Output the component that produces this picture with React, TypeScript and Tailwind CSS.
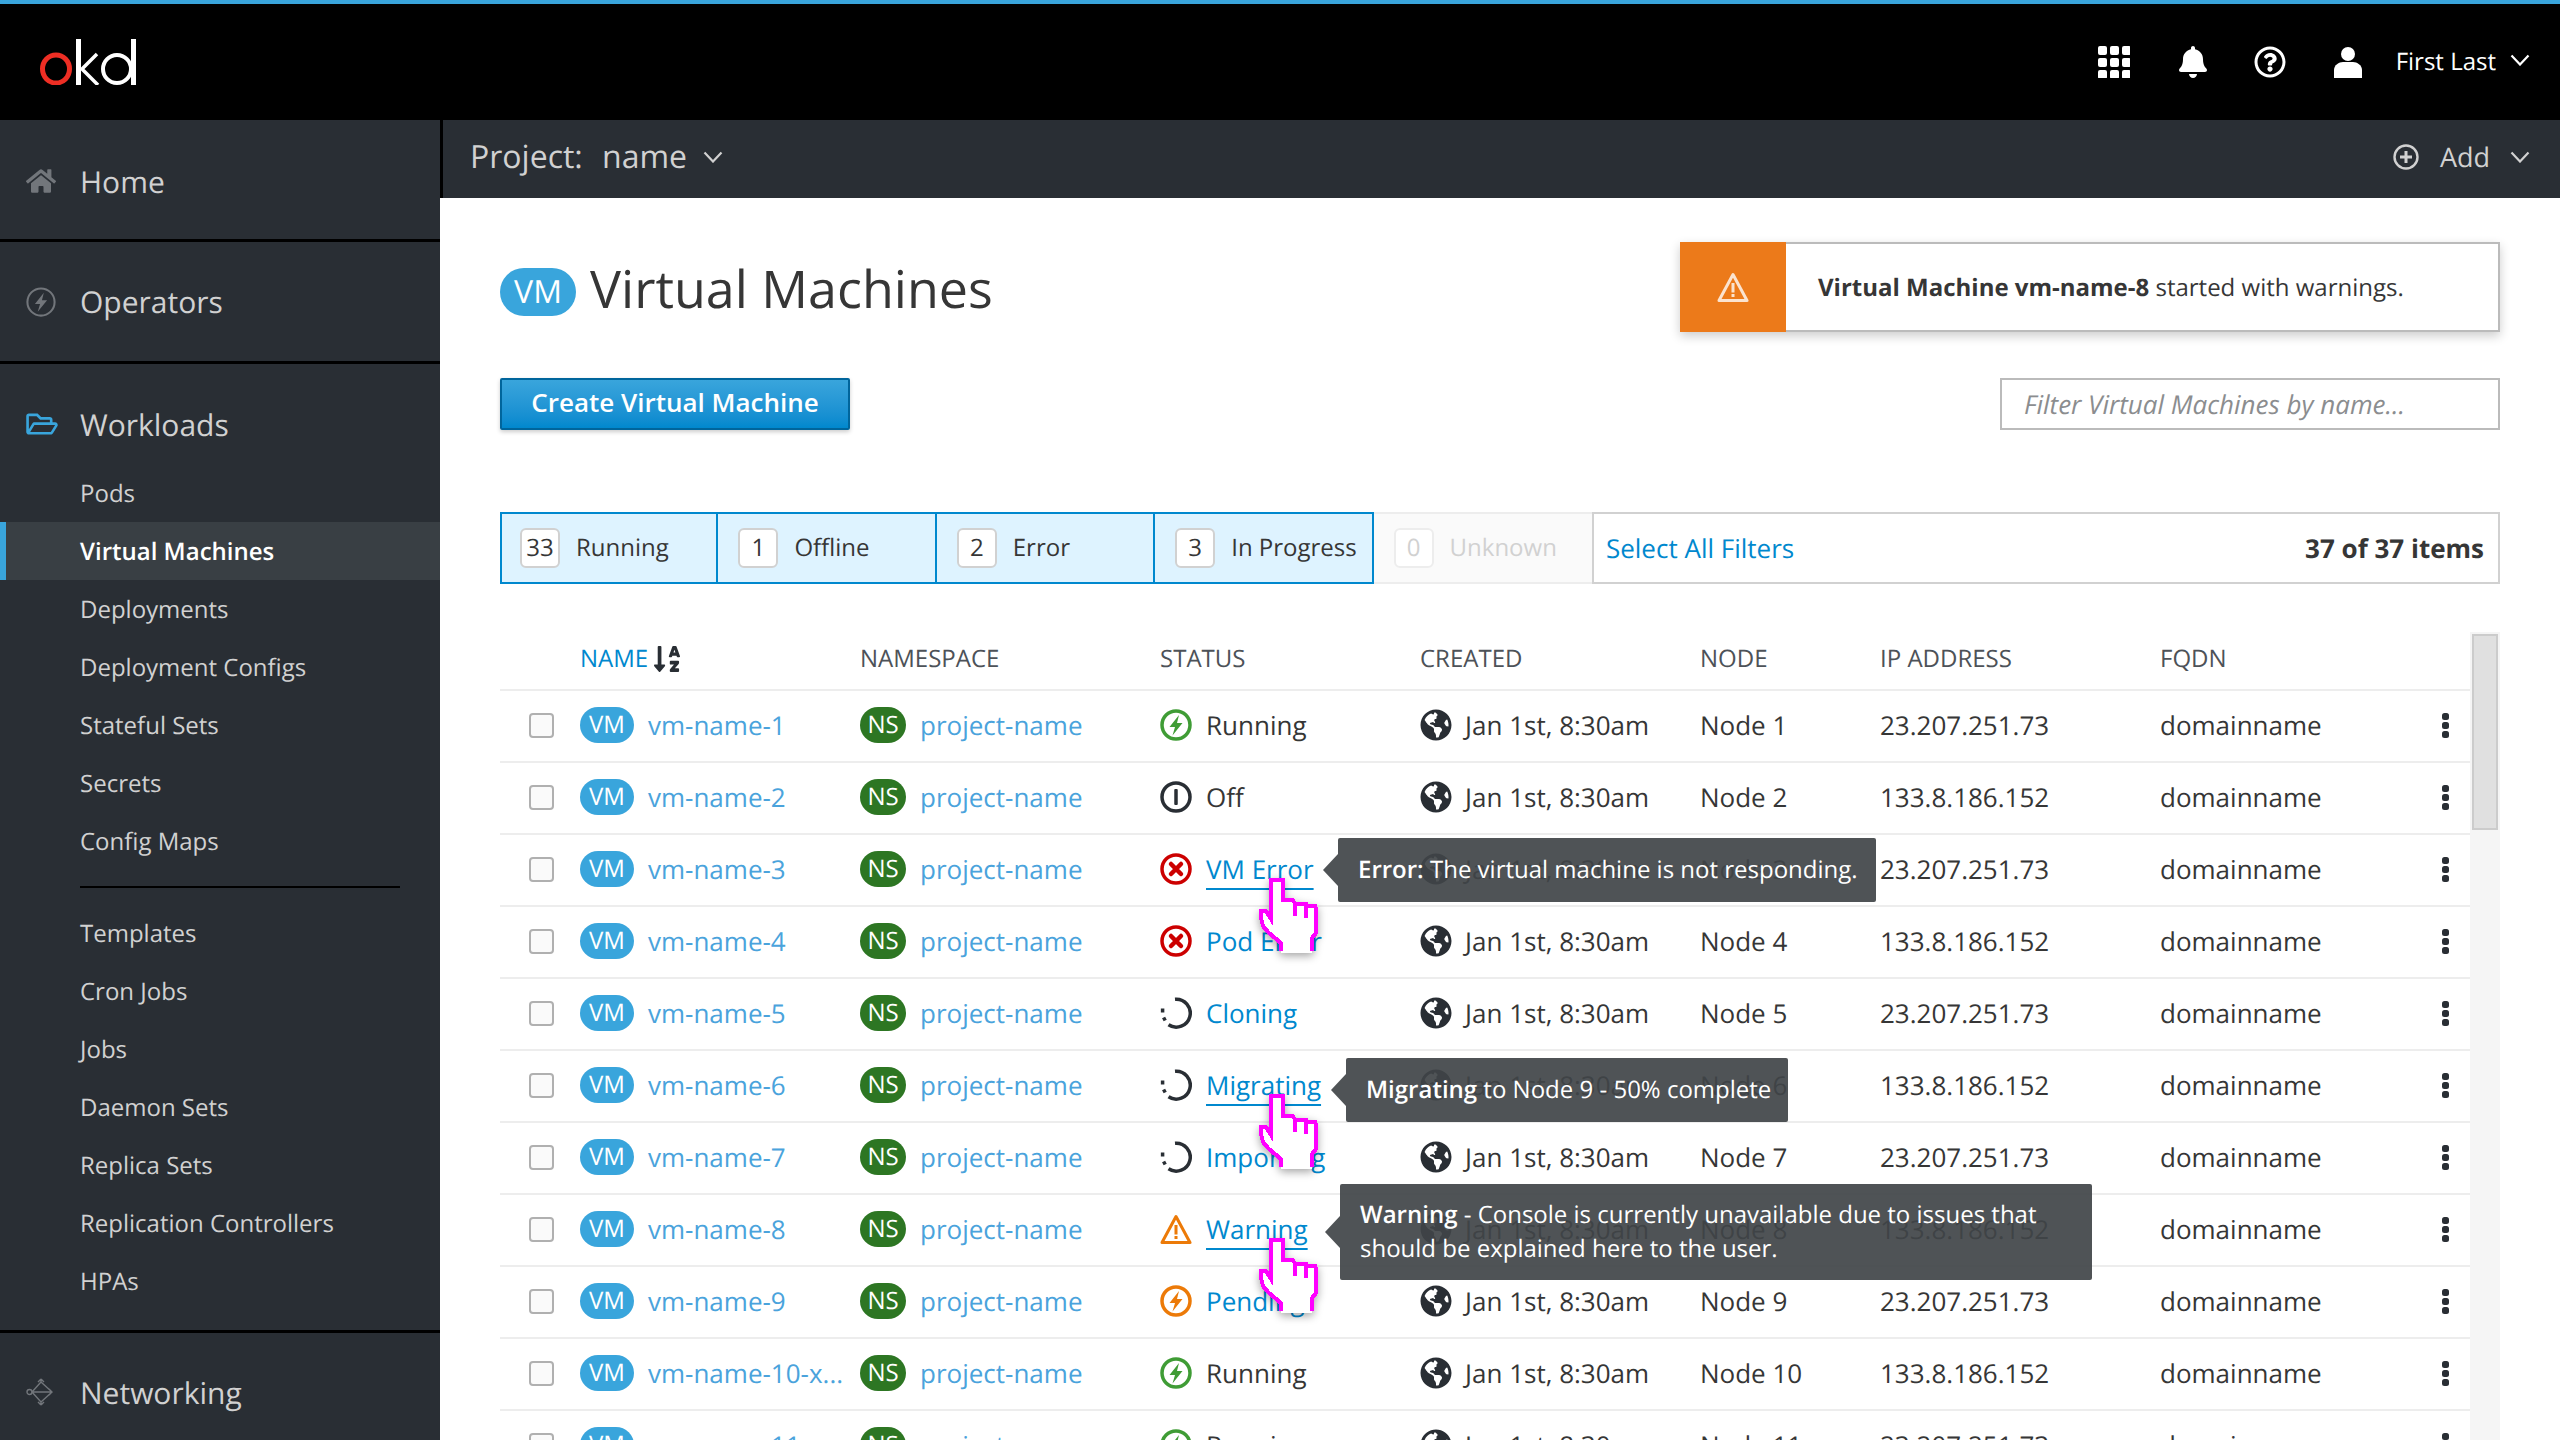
import React from 'react';
import { FaHome, FaRegFolderOpen, FaBell, FaRegQuestionCircle, FaGlobeAmericas, FaSortAlphaDown } from 'react-icons/fa';

const Chevron = ({ className = '' }: { className?: string }) => (
  <svg viewBox="0 0 20 12" className={className} fill="none" stroke="currentColor" strokeWidth="2.2">
    <path d="M1.5 1.5 10 10.5l8.5-9" />
  </svg>
);

const Bolt = ({ color }: { color: string }) => (
  <svg viewBox="0 0 32 32" className="w-8 h-8">
    <circle cx="16" cy="16" r="14" fill="none" stroke={color} strokeWidth="3.5" />
    <path d="M19 6 9.5 18H15l-2.5 8.5L22.5 14H17z" fill={color} />
  </svg>
);

const OffIcon = () => (
  <svg viewBox="0 0 32 32" className="w-8 h-8">
    <circle cx="16" cy="16" r="14" fill="none" stroke="#292e34" strokeWidth="3.5" />
    <rect x="14.25" y="8" width="3.5" height="16" rx="1" fill="#292e34" />
  </svg>
);

const ErrorIcon = () => (
  <svg viewBox="0 0 32 32" className="w-8 h-8">
    <circle cx="16" cy="16" r="14" fill="none" stroke="#cc0000" strokeWidth="3.5" />
    <path d="M11 11l10 10M21 11 11 21" stroke="#cc0000" strokeWidth="4.5" strokeLinecap="round" />
  </svg>
);

const ProgressIcon = () => (
  <svg viewBox="0 0 32 32" className="w-8 h-8" fill="none" stroke="#292e34" strokeWidth="3.5">
    <path d="M15 2.2A14 14 0 1 1 8.5 27.8" />
    <path d="M2.6 11.5v4M3.6 20.5l1.6 3" />
  </svg>
);

const WarnIcon = ({ color = '#ec7a08', className = 'w-8 h-8' }: { color?: string; className?: string }) => (
  <svg viewBox="0 0 32 32" className={className}>
    <path d="M16 3.5 30 29.5H2z" fill="none" stroke={color} strokeWidth="3" strokeLinejoin="round" />
    <rect x="14.5" y="12" width="3" height="9.5" fill={color} />
    <rect x="14.5" y="23" width="3" height="3" fill={color} />
  </svg>
);

const Hand = () => (
  <svg viewBox="0 0 59 75" className="absolute w-[59px] h-[75px] left-[759px] top-[43px] z-20 drop-shadow-[0_3px_4px_rgba(0,0,0,0.35)]" shapeRendering="crispEdges">
    <path d="M12 2h12v20h10l2 4h11l1 2h8l3 3v24l-4 5-2 15H22l-2-10-10-10-6-7-2-8v-7h5l5 8z" fill="#fff" />
    <path d="M22 73V65L10 55 4 48 2 40V33H7L12 41V2H24V22H34L36 26V38M36 26H47V40M47 28H56L57 31V55L53 60V73" fill="none" stroke="#ff00ff" strokeWidth="4" />
  </svg>
);

const Tooltip = ({ left, top, width, height, children }: { left: number; top: number; width: number; height: number; children: React.ReactNode }) => (
  <div style={{ left, top, width, height }} className="absolute z-10 rounded-[2px] bg-[#404448]/92 text-white text-[24px] leading-[34px] flex items-center pl-[20px]">
    <div className="absolute left-[-15px] top-1/2 -translate-y-1/2 w-0 h-0 border-y-[16px] border-y-transparent border-r-[15px] border-r-[#404448]/92" />
    <div>{children}</div>
  </div>
);

const sub1 = ['Pods', 'Virtual Machines', 'Deployments', 'Deployment Configs', 'Stateful Sets', 'Secrets', 'Config Maps'];
const sub2 = ['Templates', 'Cron Jobs', 'Jobs', 'Daemon Sets', 'Replica Sets', 'Replication Controllers', 'HPAs'];

const filters = [
  { n: 33, label: 'Running', on: true },
  { n: 1, label: 'Offline', on: true },
  { n: 2, label: 'Error', on: true },
  { n: 3, label: 'In Progress', on: true },
  { n: 0, label: 'Unknown', on: false },
];

const rows = [
  { name: 'vm-name-1', status: 'Running', icon: <Bolt color="#3f9c35" /> },
  { name: 'vm-name-2', status: 'Off', icon: <OffIcon /> },
  { name: 'vm-name-3', status: 'VM Error', icon: <ErrorIcon />, link: true, under: true },
  { name: 'vm-name-4', status: 'Pod Error', icon: <ErrorIcon />, link: true },
  { name: 'vm-name-5', status: 'Cloning', icon: <ProgressIcon />, link: true },
  { name: 'vm-name-6', status: 'Migrating', icon: <ProgressIcon />, link: true, under: true },
  { name: 'vm-name-7', status: 'Importing', icon: <ProgressIcon />, link: true },
  { name: 'vm-name-8', status: 'Warning', icon: <WarnIcon />, link: true, under: true },
  { name: 'vm-name-9', status: 'Pending', icon: <Bolt color="#ec7a08" />, link: true },
  { name: 'vm-name-10-x...', status: 'Running', icon: <Bolt color="#3f9c35" /> },
  { name: 'vm-name-11', status: 'Running', icon: <Bolt color="#3f9c35" /> },
];

const cols = 'grid grid-cols-[80px_280px_300px_260px_280px_180px_280px_1fr]';

const SubItem = ({ label }: { label: string }) => (
  <div className={`h-[58px] flex items-center pl-[80px] pt-[1px] text-[24px] ${label === 'Virtual Machines' ? 'bg-[#393f44] border-l-[6px] border-[#39a5dc] !pl-[74px] text-white font-semibold' : 'text-[#d1d1d1]'}`}>
    {label}
  </div>
);

export default function App() {
  return (
    <div className="w-[2560px] h-[1440px] overflow-hidden flex flex-col bg-white font-['Open_Sans',sans-serif] text-[#363636] [text-rendering:geometricPrecision]">
      <header className="h-[120px] shrink-0 bg-black border-t-4 border-[#39a5dc] flex items-center justify-between pl-[40px] pr-[30px] text-white">
        <svg viewBox="0 0 96 46" className="w-[96px] h-[46px]" fill="none">
          <ellipse cx="16" cy="30" rx="13.5" ry="14" stroke="#ee2e24" strokeWidth="5" />
          <path d="M38.5 0v46" stroke="#fff" strokeWidth="5" />
          <path d="M57 15 42 30l16 16" stroke="#fff" strokeWidth="3.5" />
          <ellipse cx="77" cy="30" rx="14" ry="14" stroke="#fff" strokeWidth="4" />
          <path d="M93.5 0v46" stroke="#fff" strokeWidth="5" />
        </svg>
        <div className="flex items-center">
          <svg viewBox="0 0 32 32" className="w-8 h-8 mr-[48px]" fill="#fff">
            {[0, 12, 24].flatMap(y => [0, 12, 24].map(x => <rect key={`${x}-${y}`} x={x} y={y} width="9" height="9" rx="2" />))}
          </svg>
          <FaBell className="w-[30px] h-[32px] mr-[46px]" />
          <FaRegQuestionCircle className="w-8 h-8 mr-[48px]" />
          <svg viewBox="0 0 28 32" className="w-[28px] h-8 mr-[34px]" fill="#fff">
            <circle cx="14" cy="8" r="7" />
            <path d="M0 32v-8c0-5 5-8 9-8h10c4 0 9 3 9 8v8z" />
          </svg>
          <span className="text-[24px] mr-[14px]">First Last</span>
          <Chevron className="w-[20px] h-[12px] -mt-[4px]" />
        </div>
      </header>

      <div className="flex flex-1 min-h-0">
        <aside className="w-[440px] shrink-0 bg-[#292e34] flex flex-col">
          <div className="h-[122px] shrink-0 border-b-[3px] border-black flex items-center pl-[26px] pt-[3px] text-[30px] text-[#d1d1d1]">
            <FaHome className="w-[30px] h-[28px] text-[#72767b] mr-[24px]" />
            Home
          </div>
          <div className="h-[122px] shrink-0 border-b-[3px] border-black flex items-center pl-[26px] text-[30px] text-[#d1d1d1]">
            <svg viewBox="0 0 32 32" className="w-[30px] h-[30px] mr-[24px]">
              <circle cx="16" cy="16" r="14.5" fill="none" stroke="#72767b" strokeWidth="2.2" />
              <path d="M19 6 9.5 18H15l-2.5 8.5L22.5 14H17z" fill="#72767b" />
            </svg>
            Operators
          </div>
          <div className="h-[60px] mt-[30px] mb-[10px] shrink-0 flex items-center pl-[26px] text-[30px] text-[#d1d1d1]">
            <FaRegFolderOpen className="w-[32px] h-[28px] text-[#39a5dc] mr-[22px]" />
            Workloads
          </div>
          {sub1.map(s => <SubItem key={s} label={s} />)}
          <div className="h-[2px] bg-black ml-[80px] mr-[40px] my-[16px] shrink-0" />
          {sub2.map(s => <SubItem key={s} label={s} />)}
          <div className="h-[3px] bg-black mt-[20px] shrink-0" />
          <div className="h-[60px] mt-[29px] shrink-0 flex items-center pl-[26px] text-[30px] text-[#d1d1d1]">
            <svg viewBox="0 0 30 30" className="w-[30px] h-[30px] mr-[24px]" fill="none" stroke="#72767b" strokeWidth="1.4">
              <circle cx="3.5" cy="15" r="2.5" />
              <path d="M6 15h20M6 15 15 5l0-3M15 2l-3 3M15 2l3 3M6 15l9 10v3M15 28l-3-3M15 28l3-3M15 5l11 10-11 10M26 15l-3-3M26 15l-3 3" />
            </svg>
            Networking
          </div>
        </aside>

        <main className="flex-1 min-w-0 flex flex-col">
          <div className="h-[78px] shrink-0 bg-[#292e34] border-l-[3px] border-black flex items-center pl-[27px] pr-[30px] pb-[4px] text-[#d1d1d1]">
            <span className="text-[32px] w-[132px]">Project:</span>
            <span className="text-[32px] mr-[16px]">name</span>
            <Chevron className="w-[20px] h-[12px]" />
            <div className="ml-auto flex items-center">
              <svg viewBox="0 0 26 26" className="w-[26px] h-[26px] mr-[21px]" fill="none" stroke="currentColor" strokeWidth="2.4">
                <circle cx="13" cy="13" r="11.5" />
                <path d="M13 7v12M7 13h12" strokeWidth="3" />
              </svg>
              <span className="text-[27px] mr-[20px]">Add</span>
              <Chevron className="w-[20px] h-[12px]" />
            </div>
          </div>

          <div className="flex-1 min-h-0 pl-[60px] pr-[60px] pt-[44px] flex flex-col">
            <div className="flex items-start justify-between h-[90px] shrink-0">
              <div className="flex items-center mt-[23px]">
                <span className="w-[76px] h-[48px] rounded-full bg-[#39a5dc] text-white text-[32px] flex items-center justify-center">VM</span>
                <h1 className="text-[52px] leading-[60px] ml-[14px] -mt-[6px] text-[#363636]">Virtual Machines</h1>
              </div>
              <div className="w-[820px] h-[90px] flex bg-white border-2 border-l-0 border-[#bbbbbb] shadow-[0_4px_10px_rgba(0,0,0,0.2)]">
                <div className="w-[106px] h-[90px] -mt-[2px] bg-[#ec7a1a] flex items-center justify-center shrink-0">
                  <WarnIcon color="#fbe3cf" />
                </div>
                <div className="flex items-center pl-[32px] pt-[1px] text-[24px]">
                  <span><b className="font-bold">Virtual Machine vm-name-8</b> started with warnings.</span>
                </div>
              </div>
            </div>

            <div className="flex items-center justify-between mt-[46px] shrink-0">
              <button className="w-[350px] h-[52px] pb-[4px] rounded-[2px] border-2 border-[#00659c] bg-gradient-to-b from-[#39a5dc] to-[#0088ce] text-white text-[26px] font-semibold shadow-[0_2px_4px_rgba(0,0,0,0.2)]">
                Create Virtual Machine
              </button>
              <div className="w-[500px] h-[52px] border-2 border-[#bbbbbb] flex items-center pl-[22px] italic text-[26px] text-[#8b8d8f]">
                Filter Virtual Machines by name...
              </div>
            </div>

            <div className="flex h-[72px] mt-[82px] shrink-0">
              {filters.map(f => (
                <div key={f.label} className={`w-[218.4px] shrink-0 flex items-center pl-[20px] first:pl-[18px] first:border-l-2 text-[24px] border-y-2 ${f.on ? 'bg-[#def3ff] border-[#0088ce] border-r-2' : 'bg-[#fafafa] border-[#ededed] text-[#d1d1d1]'}`}>
                  <span className={`w-[40px] h-[40px] rounded-[6px] border-2 flex items-center justify-center mr-[16px] bg-white ${f.on ? 'border-[#d1d1d1]' : 'border-[#ededed]'}`}>{f.n}</span>
                  {f.label}
                </div>
              ))}
              <div className="flex-1 border-2 border-[#d1d1d1] flex items-center justify-between pl-[12px] pr-[14px]">
                <span className="text-[26px] text-[#0088ce]">Select All Filters</span>
                <span className="text-[26px] font-bold">37 of 37 items</span>
              </div>
            </div>

            <div className="flex flex-1 min-h-0 mt-[43px]">
              <div className="flex-1 min-w-0 flex flex-col">
                <div className={`${cols} h-[64px] pt-[1px] shrink-0 items-center border-b-2 border-[#ededed] text-[24px] text-[#4d5258]`}>
                  <span />
                  <span className="flex items-center text-[#0088ce]">NAME <FaSortAlphaDown className="w-[26px] h-[30px] ml-[6px] text-[#292e34]" /></span>
                  <span>NAMESPACE</span>
                  <span>STATUS</span>
                  <span>CREATED</span>
                  <span>NODE</span>
                  <span>IP ADDRESS</span>
                  <span>FQDN</span>
                </div>
                {rows.map((r, i) => (
                  <div key={r.name} className={`${cols} relative h-[72px] pb-[2px] shrink-0 items-center border-b-2 border-[#ededed] text-[26px]`}>
                    <div className="pl-[29px]">
                      <div className="w-[25px] h-[25px] rounded-[4px] border-2 border-[#b0b0b0] bg-[#fafafa]" />
                    </div>
                    <div className="flex items-center min-w-0">
                      <span className="w-[54px] h-[36px] rounded-full bg-[#39a5dc] text-white text-[24px] flex items-center justify-center shrink-0">VM</span>
                      <span className="ml-[14px] text-[#4aa3dc] whitespace-nowrap">{r.name}</span>
                    </div>
                    <div className="flex items-center">
                      <span className="w-[46px] h-[36px] rounded-full bg-[#2d7623] text-white text-[24px] flex items-center justify-center shrink-0">NS</span>
                      <span className="ml-[14px] text-[#4aa3dc]">project-name</span>
                    </div>
                    <div className="flex items-center">
                      <span className="w-8 h-8 shrink-0">{r.icon}</span>
                      <span className={`ml-[14px] ${r.link ? 'text-[#0088ce]' : ''} ${r.under ? 'underline decoration-2 underline-offset-[9px] [text-decoration-skip-ink:none]' : ''}`}>{r.status}</span>
                    </div>
                    <div className="flex items-center">
                      <FaGlobeAmericas className="w-8 h-8 text-[#292e34] shrink-0" />
                      <span className="ml-[13px] whitespace-nowrap">Jan 1st, 8:30am</span>
                    </div>
                    <div>Node {i + 1}</div>
                    <div>{i % 2 === 0 ? '23.207.251.73' : '133.8.186.152'}</div>
                    <div className="flex items-center justify-between pr-[21px]">
                      <span>domainname</span>
                      <svg viewBox="0 0 7 25" className="w-[7px] h-[25px]" fill="#292e34">
                        <rect width="7" height="7" rx="2.5" />
                        <rect y="9" width="7" height="7" rx="2.5" />
                        <rect y="18" width="7" height="7" rx="2.5" />
                      </svg>
                    </div>
                    {i === 2 && <Tooltip left={838} top={3} width={538} height={64}><span className="whitespace-nowrap"><b className="font-semibold">Error:</b> The virtual machine is not responding.</span></Tooltip>}
                    {i === 5 && <Tooltip left={846} top={7} width={442} height={64}><span className="whitespace-nowrap"><b className="font-semibold">Migrating</b> to Node 9 - 50% complete</span></Tooltip>}
                    {i === 7 && <Tooltip left={840} top={-11} width={752} height={96}><b className="font-semibold">Warning</b> - Console is currently unavailable due to issues that<br />should be explained here to the user.</Tooltip>}
                    {r.under && <Hand />}
                  </div>
                ))}
              </div>
              <div className="w-[30px] shrink-0 mt-[5px] bg-[#f5f5f5]">
                <div className="h-[196px] mx-[2px] mt-[2px] bg-[#e0e0e0] border-2 border-[#cccccc]" />
              </div>
            </div>
          </div>
        </main>
      </div>
    </div>
  );
}
